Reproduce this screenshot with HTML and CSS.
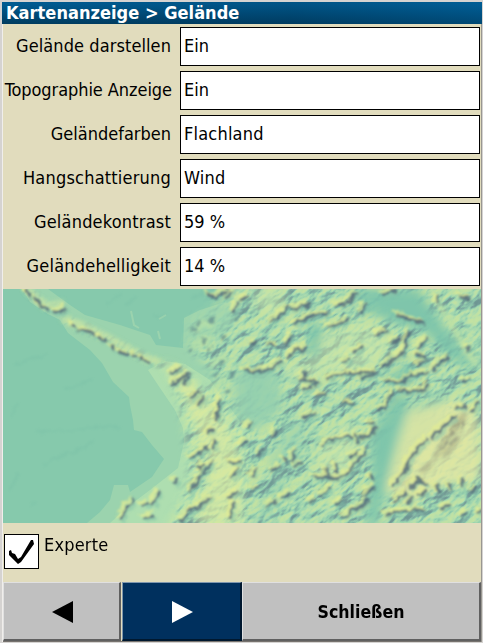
FILE: index.html
```html
<!DOCTYPE html>
<html lang="de">
<head>
<meta charset="utf-8">
<title>Kartenanzeige &gt; Gelände</title>
<link rel="stylesheet" href="styles.css">
</head>
<body>
<main class="window">
  <header class="title"><span class="title-text">Kartenanzeige &gt; Gelände</span></header>
  <section class="form">
    <div class="row"><span class="label medium">Gelände darstellen</span><div class="field">Ein</div></div>
    <div class="row"><span class="label tight">Topographie Anzeige</span><div class="field">Ein</div></div>
    <div class="row"><span class="label">Geländefarben</span><div class="field wide">Flachland</div></div>
    <div class="row"><span class="label wide">Hangschattierung</span><div class="field wide">Wind</div></div>
    <div class="row"><span class="label wide">Geländekontrast</span><div class="field">59 %</div></div>
    <div class="row"><span class="label wide">Geländehelligkeit</span><div class="field">14 %</div></div>
  </section>
  <svg class="terrain" viewBox="3 289 478 234" preserveAspectRatio="none">
    <defs>
      <filter id="relief" x="0" y="0" width="1" height="1" color-interpolation-filters="sRGB">
        <feTurbulence type="fractalNoise" baseFrequency="0.035 0.06" numOctaves="4" seed="11"/>
        <feDiffuseLighting surfaceScale="7.5" diffuseConstant="1" lighting-color="#fff"><feDistantLight azimuth="270" elevation="48"/></feDiffuseLighting>
        <feComponentTransfer>
          <feFuncR type="table" tableValues=".33 .38 .44 .50 .58 .67 .77 .87"/>
          <feFuncG type="table" tableValues=".45 .50 .60 .71 .81 .86 .90 .93"/>
          <feFuncB type="table" tableValues=".52 .55 .61 .65 .68 .69 .67 .61"/>
        </feComponentTransfer>
      </filter>
      <filter id="b2" x="-.2" y="-.2" width="1.4" height="1.4"><feGaussianBlur stdDeviation="2"/></filter>
      <filter id="b5" x="-.3" y="-.3" width="1.6" height="1.6"><feGaussianBlur stdDeviation="5"/></filter>
      <filter id="rough" filterUnits="userSpaceOnUse" x="0" y="285" width="485" height="242">
        <feTurbulence type="fractalNoise" baseFrequency=".16" numOctaves="2" seed="5" result="n"/>
        <feDisplacementMap in="SourceGraphic" in2="n" scale="7" xChannelSelector="R" yChannelSelector="G"/>
        <feGaussianBlur stdDeviation=".9"/>
      </filter>
      <mask id="hills" maskUnits="userSpaceOnUse" x="0" y="280" width="490" height="250">
        <g filter="url(#b5)">
          <path fill="#fff" d="M225 280H495V535H165L190 480 184 420 176 390 166 365 186 372 205 392 218 378 202 360 188 345 190 318 208 310Z"/>
          <path fill="#000" d="M362 535 374 480 370 440 390 415 405 403 418 412 402 450 385 490 380 535ZM368 292 418 292 445 325 475 365 460 358 425 330 388 322Z"/>
          <path fill="#000" opacity=".75" d="M230 370 272 366 285 408 262 430 230 422ZM410 405 450 392 440 425 400 480 388 500 378 495ZM180 300 235 300 240 325 205 345 180 345Z"/>
        </g>
        <path fill="none" stroke="#999" stroke-width="9" filter="url(#b2)" d="M27 289 45 306 61 308M64 319 85 328 115 343 145 358 165 365"/>
      </mask>
      <g id="ridges" fill="none" stroke-linecap="round" stroke-linejoin="round">
        <path d="M27 291l3 4M35 298l4 5M41 306l7 4M54 312l6 0 5-4M72 325l3 2M79 330l9 1 6 4M99 337l7 3M111 346l3 3M119 352l9 3M133 355l3 1M141 358l8 5M172 373l8-5M173 384l8-5 7-6M184 384l4-7M191 398l8-6M198 405l6-8M191 458l8-4 8-7M207 433l6-3M217 420l1-12 3-9M214 449l1-10M190 492l9-13 13-17M182 521l6-9 12-6 10-8M199 468l5-4M121 519l5-11 7-7M153 504l6-12M143 505l5-1M144 518l9-2M174 483l4-3M230 462l11 1M232 478l7-9M230 497l8-6M230 518l3-14M241 446l6-6"/>
        <path d="M208 294l8 4 11-7M226 298l6-6M241 300l6-3M233 312l5-9M271 322l8-5M279 317l9-11M291 309l14-3 4-2M294 324l12-5 9-4 7 0M321 315l8-1M328 327l12-3 8-5M336 306l8-1 6-4 6-8M362 313l3-8M383 294l12-3M403 317l-5-3M401 316l8 3 12 3M416 322l8 2M437 302l1-5M460 297l9 3"/>
        <path d="M289 357l7-8 9 0M287 345l4-9M299 352l8-6M269 344l9 3M250 345l7-3M244 370l14 2 12-3 12-8M306 373l-3 4M300 380l15 1M304 391l8-6 7-2M318 395l9 0M354 352l8-5M377 334l10-3M391 344l8-5M402 354l3-8 4-14M405 354l-3 0M383 368l14-12 6-1M397 355l5-2M348 374l11-1 18-2M361 379l8-3 9-3M385 381l18 2 8-7 15-3M416 355l9 2M418 348l9-9M417 365l10-4M433 370l7-8 8-4M463 382l6-4M407 392l11-1 7-1 2-6M405 391l-5-1M344 404l10-1M387 403l7-11M466 350l4-2M343 362l7-3M328 378l18-5"/>
        <path d="M379 410l9-5M361 437l10-1 4-8M368 423l6-1M323 446l5-5 12-3 11-2M356 435l2 8M305 418l9-4M273 436l4-5M283 458l4 5M295 466l6-3M292 461l4-11M272 471l8-5M252 476l4-6M314 477l13 0 11 2 9-5 7-9 12-13M350 457l7-4M337 472l-2-8M328 475l-2-6M366 495l7-7M374 480l-3-4M343 517l8-6 12-5 5-7M367 492l7-4M385 515l12-3 9-1 11-1 7 1M396 500l10-7M411 488l6-9M404 471l6-13 7-9M393 485l16-18M432 437l13-12 10-8M418 448l9-9M456 408l9-1M473 411l5-8M451 491l-2-7M472 492l4-5M440 492l-4-7M462 486l1-6M418 495l8-3M408 503l4-5M426 484l-7-3M282 498l8-4M267 506l8-5M253 490l5-3M310 502l5-3M321 495l10-7M461 517l5-5M479 514l1-5M442 508l8-3M335 505l8-4M262 451l-3 4M247 427l4-3"/>
      </g>
    </defs>
    <rect x="3" y="289" width="478" height="234" fill="#86c9ac"/>
    <path fill="#9bd3ae" d="M22 289 30 302 48 314 60 320 68 333 90 350 102 363 113 382 129 397 130 405 133 420 134 430 142 432 152 445 164 459 152 477 130 492 128 485 114 485 110 500 100 512 87 523H481V289H228L225 302 200 310 184 318 183 348 156 345 150 335 120 325 85 315 70 305 48 289Z"/>
    <path fill="#aedeb0" d="M148 370 165 361 185 364 210 380 250 435 245 523H110L130 505 150 490 178 468 184 442 183 428 175 410 160 388Z"/>
    <g fill="none" stroke="#9bd3ae" stroke-width="2"><path d="M131 311l3 14 5 3M159 319l7-4M160 339l-2-8"/></g>
    <g fill="none" stroke="#6fb7a3" stroke-width="2.5" opacity=".2" filter="url(#rough)"><path d="M35 431h35l20-4h30M43 465l15-8 18-6 17-9M14 365l20-7 14-4M12 417l5-14M10 489l9-17M65 390l18-8 10-2M107 304l15-10M125 305l10-8M190 300l15-9M31 506l4-5M155 316l10-1"/></g>
    <g mask="url(#hills)" opacity=".62"><g transform="rotate(-38 242 406)"><rect x="-70" y="90" width="630" height="630" filter="url(#relief)"/></g></g>
    <g filter="url(#b5)">
      <path fill="#dcea9f" opacity=".65" d="M164 362 182 372 206 400 222 418 240 455 242 523H195L212 468 196 430 187 402Z"/>
      <path fill="#e6e7a1" opacity=".75" d="M408 412 456 400 478 415 481 478 440 485 405 502 386 488 398 445Z"/>
      <path fill="#cfe8a7" opacity=".5" d="M318 335 370 322 394 340 376 365 335 378 305 362ZM255 289H287L280 318 252 308ZM322 440 352 420 362 455 340 480 315 475ZM286 365 312 360 322 378 300 386Z"/>
      <path fill="#78c2aa" opacity=".8" d="M352 289 418 289 442 326 478 372 452 360 424 330 390 320 365 312ZM309 320 324 328 317 360 307 352ZM408 363 380 382 399 386 420 370ZM398 390 410 400 396 433 384 485 376 523H366L373 470 372 436 387 408Z"/>
      <path fill="#8fcdae" opacity=".55" d="M241 365 275 372 284 400 262 424 241 420ZM276 474 296 455 310 420 288 428 268 462ZM265 523 290 480 278 480 255 523Z"/>
    </g>
    <path d="M430 289 447 318 476 365" fill="none" stroke="#bfe1a5" stroke-width="5" opacity=".8" filter="url(#b2)"/>
    <path d="M438 450l13-15 13-17M443 456l16-18M434 458l5-6M421 472l10-8M452 427l14-14" fill="none" stroke="#96957d" stroke-width="5" opacity=".5" filter="url(#b2)"/>
    <path d="M440 449l9-7M443 440l10-8M450 431l10-9M449 446l10-9M459 430l6-8" fill="none" stroke="#838779" stroke-width="2" opacity=".6" filter="url(#rough)"/>
    <g fill="none" stroke-linecap="round" filter="url(#b2)"><path d="M27 289 45 306 61 303M64 319 85 326 115 341 145 358 157 361" stroke="#c4e1a5" stroke-width="6" opacity=".75"/><path d="M198 330l5-8 8 4M193 347l12-10 5 12M212 365l10-9 5 5M215 387l9-8" stroke="#b5dfa8" stroke-width="5"/></g>
    <path d="M197 324l4-2M191 332l5-4M211 323l1-7M222 340l3-5M202 345l3-7M208 352l2-6M220 367l4-7M229 378l5-5M213 377l5-5M226 392l4-3M188 352l4-3M234 319l5-2" fill="none" stroke="#69918f" stroke-width="3" opacity=".8" filter="url(#rough)"/>
    <g filter="url(#rough)">
      <use href="#ridges" transform="translate(-3 -2.8)" stroke="#e4ed93" stroke-width="3.4" opacity=".72"/>
      <use href="#ridges" transform="translate(2.5 2.5)" stroke="#83c2a9" stroke-width="3" opacity=".5"/>
      <use href="#ridges" stroke="#526878" stroke-width="3.1" opacity=".82"/>
    </g>
  </svg>
  <section class="expert">
    <span class="checkbox"><svg viewBox="0 0 33 33"><path d="M4 16 6 15 7 18 10 19 13 24 16 22 26 5 28 5 29 9 16 27 13 29 4 20Z"/></svg></span>
    <span class="expert-label">Experte</span>
  </section>
  <footer class="buttons">
    <div class="button previous"><svg viewBox="0 0 21 22"><path d="M0 11 21 0V22Z"/></svg></div>
    <div class="button next"><svg viewBox="0 0 21 22"><path d="M21 11 0 0V22Z"/></svg></div>
    <div class="button close">Schließen</div>
  </footer>
</main>
</body>
</html>
```
FILE: styles.css
```css
* { box-sizing: border-box; }
body {
  margin: 0;
  background: #d4d0ce;
  color: #000;
  font: 18px/20px "DejaVu Sans Condensed", "DejaVu Sans", sans-serif;
  font-stretch: condensed;
}
.window {
  width: 483px;
  height: 643px;
  border: solid #d5d3d1;
  border-width: 2px 1px 1px 2px;
  display: flex;
  flex-direction: column;
  background: #e1dcbd;
  box-shadow: inset 1px 0 #f0eeeb, inset -1px 0 #999791, inset 0 -1px #77736f;
  overflow: hidden;
}
.title {
  height: 22px;
  flex: none;
  padding: 1px 0 0 4px;
  color: #fff;
  font-weight: bold;
  letter-spacing: .04px;
  background: linear-gradient(90deg, #003c6200, #003c6244 60%, #00609a55), linear-gradient(#005b91 10%, #003c60);
  white-space: nowrap;
}
.form { flex: none; padding-top: 3px; height: 265px; }
.row { display: flex; height: 44px; padding-right: 1px; }
.label {
  flex: none;
  width: 170px;
  padding: 9px 1px 0 0;
  text-align: right;
  white-space: nowrap;
}
.field {
  width: 300px;
  height: 39px;
  margin-left: 8px;
  padding: 8px 3px;
  border: 1px solid #000;
  background: #fff;
}
.label.medium { letter-spacing: .08px; }
.label.tight { letter-spacing: -.06px; padding-right: 0; }
.wide { letter-spacing: .2px; }
.terrain { display: block; flex: none; width: 478px; height: 234px; margin-left: 1px; }
.expert { display: flex; height: 59px; flex: none; padding: 11px 0 0 2px; }
.checkbox { width: 35px; height: 35px; border: 1px solid #000; background: #fff; }
.checkbox svg { display: block; width: 33px; height: 33px; }
.expert-label { margin-left: 5px; padding-top: 1px; letter-spacing: .2px; }
.buttons { display: flex; flex: none; height: 59px; margin-left: 1px; }
.button {
  height: 59px;
  display: flex;
  align-items: center;
  justify-content: center;
  background: #c0c0c0;
  border: solid;
  border-width: 1px 2px 2px 1px;
  border-color: #e0e0e0 #606060 #606060 #e0e0e0;
  font-weight: bold;
}
.button svg { width: 21px; height: 22px; position: relative; top: 1px; left: 1px; }
.previous { width: 118px; }
.next { width: 120px; margin-left: 1px; background: #00305e; fill: #fff; border-color: #7f97ae #00182f #00182f #7f97ae; }
.close { width: 239px; font-size: 17.6px; padding-top: 1px; }
```
